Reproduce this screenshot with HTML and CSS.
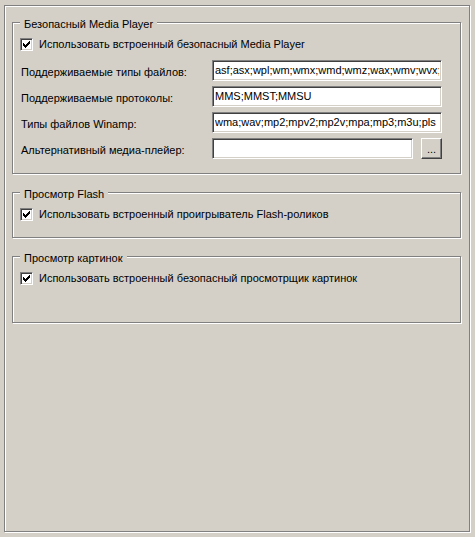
FILE: index.html
```html
<!DOCTYPE html>
<html>
<head>
<meta charset="utf-8">
<link rel="stylesheet" href="styles.css">
</head>
<body>
<div class="panel">
  <div class="group g1">
    <span class="title">Безопасный Media Player</span>
    <div class="check">
      <span class="box"><svg width="11" height="11" viewBox="1 1 11 11" shape-rendering="crispEdges"><path d="M9 3h1v1h-1z M8 4h2v1h-2z M3 5h1v1h-1z M7 5h3v1h-3z M3 6h2v1h-2z M6 6h3v1h-3z M3 7h5v1h-5z M4 8h3v1h-3z M5 9h1v1h-1z" fill="#000"/></svg></span>
      <span class="ctext">Использовать встроенный безопасный Media Player</span>
    </div>
    <div class="fields">
      <span class="lbl">Поддерживаемые типы файлов:</span>
      <input class="edit" type="text" value="asf;asx;wpl;wm;wmx;wmd;wmz;wax;wmv;wvx;cda;avi;wav;mpeg;mpg;mpe;m1v;mp2;mp3;mpa;mid;midi;rmi">
      <span class="lbl">Поддерживаемые протоколы:</span>
      <input class="edit" type="text" value="MMS;MMST;MMSU">
      <span class="lbl">Типы файлов Winamp:</span>
      <input class="edit" type="text" value="wma;wav;mp2;mpv2;mp2v;mpa;mp3;m3u;pls">
      <span class="lbl">Альтернативный медиа-плейер:</span>
      <div class="browse">
        <input class="edit short" type="text" value="">
        <button class="btn" type="button">...</button>
      </div>
    </div>
  </div>
  <div class="group g2">
    <span class="title">Просмотр Flash</span>
    <div class="check">
      <span class="box"><svg width="11" height="11" viewBox="1 1 11 11" shape-rendering="crispEdges"><path d="M9 3h1v1h-1z M8 4h2v1h-2z M3 5h1v1h-1z M7 5h3v1h-3z M3 6h2v1h-2z M6 6h3v1h-3z M3 7h5v1h-5z M4 8h3v1h-3z M5 9h1v1h-1z" fill="#000"/></svg></span>
      <span class="ctext">Использовать встроенный проигрыватель Flash-роликов</span>
    </div>
  </div>
  <div class="group g3">
    <span class="title">Просмотр картинок</span>
    <div class="check">
      <span class="box"><svg width="11" height="11" viewBox="1 1 11 11" shape-rendering="crispEdges"><path d="M9 3h1v1h-1z M8 4h2v1h-2z M3 5h1v1h-1z M7 5h3v1h-3z M3 6h2v1h-2z M6 6h3v1h-3z M3 7h5v1h-5z M4 8h3v1h-3z M5 9h1v1h-1z" fill="#000"/></svg></span>
      <span class="ctext">Использовать встроенный безопасный просмотрщик картинок</span>
    </div>
  </div>
</div>
</body>
</html>
```
FILE: styles.css
```css
* { box-sizing: border-box; }
html, body {
  margin: 0;
  background: #d4d0c8;
}
body {
  padding: 5px 0 0 4px;
  width: 475px;
  height: 537px;
  overflow: hidden;
  font: 11px/13px "Liberation Sans", Arial, sans-serif;
  color: #000;
}
.panel {
  width: 466px;
  height: 527px;
  border: 1px solid #808080;
  box-shadow: inset 1px 1px 0 #fff, 1px 1px 0 #fff;
  padding: 16px 0 0 7px;
}
.group {
  position: relative;
  width: 449px;
  border: 1px solid #808080;
  box-shadow: inset 1px 1px 0 #fff, 1px 1px 0 #fff;
  padding: 15px 0 0 7px;
}
.group + .group { margin-top: 18px; }
.g1 { height: 152px; }
.g2 { height: 46px; }
.g3 { height: 67px; }
.title {
  position: absolute;
  left: 7px;
  top: -5px;
  padding: 0 4px;
  background: #d4d0c8;
  white-space: nowrap;
}
.check {
  display: flex;
  align-items: center;
  gap: 6px;
  height: 13px;
}
.box {
  width: 13px;
  height: 13px;
  flex: none;
  background: #fff;
  border: 1px solid;
  border-color: #808080 #fff #fff #808080;
  box-shadow: inset 1px 1px 0 #404040, inset -1px -1px 0 #d4d0c8;
}
.box svg { display: block; }
.ctext { white-space: nowrap; }
.fields {
  margin-top: 9px;
  display: grid;
  grid-template-columns: 192px 230px;
  grid-auto-rows: 21px;
  row-gap: 5px;
}
.lbl {
  padding: 2px 0 0 1px;
  line-height: 21px;
  white-space: nowrap;
}
.edit {
  display: block;
  width: 230px;
  height: 21px;
  margin: 0;
  padding: 2px 2px 4px 2px;
  border: 1px solid;
  border-color: #808080 #fff #fff #808080;
  box-shadow: inset 1px 1px 0 #404040, inset -1px -1px 0 #d4d0c8;
  background: #fff;
  font: 11px/13px "Liberation Sans", Arial, sans-serif;
  color: #000;
  outline: none;
  border-radius: 0;
}
.browse {
  display: flex;
  gap: 8px;
}
.edit.short { width: 202px; }
.btn {
  width: 21px;
  height: 21px;
  margin: 0;
  padding: 0 0 2px;
  border: 1px solid;
  border-color: #fff #404040 #404040 #fff;
  box-shadow: inset -1px -1px 0 #808080;
  background: #d4d0c8;
  font: 11px/13px "Liberation Sans", Arial, sans-serif;
  color: #000;
  border-radius: 0;
  display: flex;
  align-items: flex-end;
  justify-content: center;
}
```
